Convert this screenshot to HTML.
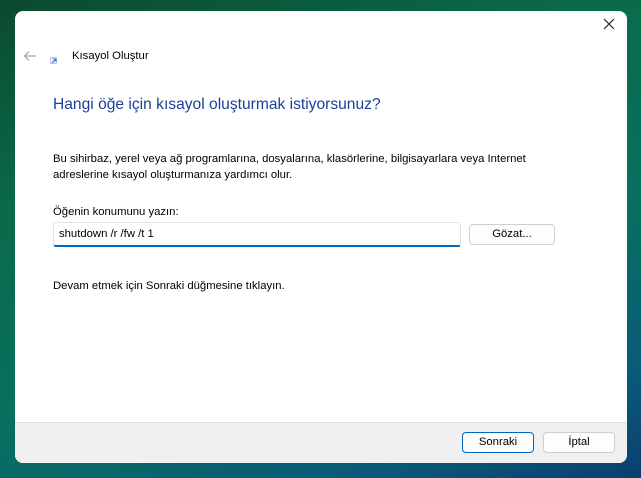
<!DOCTYPE html>
<html><head><meta charset="utf-8"><style>
*{margin:0;padding:0;box-sizing:border-box}
body{width:641px;height:478px;overflow:hidden;font-family:"Liberation Sans",sans-serif;font-size:11.3px;color:#000;
background:linear-gradient(160deg,#0b4a2e 0%,#0a6a4a 30%,#08705f 60%,#0a5a78 85%,#0a3f70 100%);position:relative}
.win{position:absolute;left:15px;top:11px;width:612px;height:452px;background:#fff;border-radius:8px;overflow:hidden}
.foot{position:absolute;left:0;top:411px;width:612px;height:41px;background:#f0f0f0;border-top:1px solid #dcdcdc}
.t{position:absolute;white-space:nowrap}
.btn{position:absolute;height:21px;border:1px solid #cfcfcf;border-radius:4px;background:#fdfdfd;text-align:center;line-height:19px;font-size:11.3px}
</style></head><body>
<div class="win">
<svg style="position:absolute;left:588px;top:7px" width="12" height="12"><path d="M1 1L11 11M11 1L1 11" stroke="#222" stroke-width="1.2"/></svg>
<svg style="position:absolute;left:8px;top:39px" width="14" height="12"><path d="M13 6H2M6 1.5L1.5 6L6 10.5" stroke="#a0a0a0" stroke-width="1.2" fill="none"/></svg>
<div style="position:absolute;left:35px;top:46px;width:7px;height:7px;border:1px solid #bcd;background:#eef"></div>
<svg style="position:absolute;left:36px;top:47px" width="6" height="6"><path d="M1 5L5 1M2 1H5V4" stroke="#3070d0" stroke-width="1" fill="none"/></svg>
<div class="t" style="left:57px;top:39px">Kısayol Oluştur</div>
<div class="t" style="left:38px;top:85px;font-size:15.6px;color:#1c3f9a">Hangi öğe için kısayol oluşturmak istiyorsunuz?</div>
<div class="t" style="left:38px;top:140px;line-height:16px">Bu sihirbaz, yerel veya ağ programlarına, dosyalarına, klasörlerine, bilgisayarlara veya Internet<br>adreslerine kısayol oluşturmanıza yardımcı olur.</div>
<div class="t" style="left:38px;top:195px">Öğenin konumunu yazın:</div>
<div style="position:absolute;left:38px;top:211px;width:408px;height:25px;border:1px solid #e2e2e2;border-bottom:2px solid #0067c0;border-radius:3px;background:#fff"></div>
<div class="t" style="left:44px;top:217px">shutdown /r /fw /t 1</div>
<div class="btn" style="left:454px;top:213px;width:86px">Gözat...</div>
<div class="t" style="left:38px;top:269px">Devam etmek için Sonraki düğmesine tıklayın.</div>
<div class="foot">
<div class="btn" style="left:447px;top:9px;width:72px;border-color:#0067c0">Sonraki</div>
<div class="btn" style="left:528px;top:9px;width:72px">İptal</div>
</div>
</div>
</body></html>
